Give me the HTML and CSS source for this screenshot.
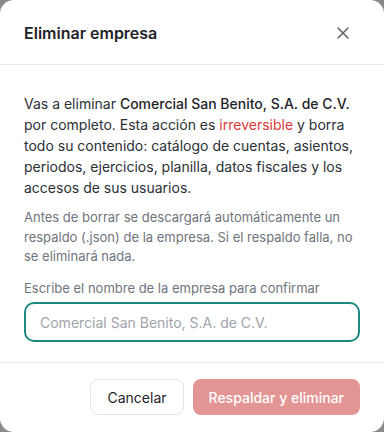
FILE: index.html
```html
<!DOCTYPE html>
<html lang="es">
<head>
  <meta charset="UTF-8">
  <meta name="viewport" content="width=device-width, initial-scale=1.0">
  <title>Eliminar empresa</title>
  <link rel="stylesheet" href="styles.css">
</head>
<body>
  <div class="modal">
    <div class="modal-header">
      <h2 class="modal-title">Eliminar empresa</h2>
      <button class="close" aria-label="Cerrar">
        <svg width="14" height="14" viewBox="0 0 14 14" fill="none" stroke="currentColor" stroke-width="1.5" stroke-linecap="round">
          <path d="M2 2L12 12M12 2L2 12"/>
        </svg>
      </button>
    </div>

    <div class="modal-body">
      <p class="lead">
        Vas a eliminar <strong>Comercial San Benito, S.A. de C.V.</strong> por completo.
        Esta acción es <span class="danger">irreversible</span> y borra todo su contenido:
        catálogo de cuentas, asientos, periodos, ejercicios, planilla, datos fiscales y los
        accesos de sus usuarios.
      </p>
      <p class="note">
        Antes de borrar se descargará automáticamente un respaldo (.json) de la empresa.
        Si el respaldo falla, no se eliminará nada.
      </p>
      <label class="field-label" for="confirm">Escribe el nombre de la empresa para confirmar</label>
      <input id="confirm" class="field" type="text" placeholder="Comercial San Benito, S.A. de C.V.">
    </div>

    <div class="modal-footer">
      <button class="btn btn-secondary">Cancelar</button>
      <button class="btn btn-danger" disabled>Respaldar y eliminar</button>
    </div>
  </div>
</body>
</html>
```

FILE: styles.css
```css
* {
  box-sizing: border-box;
}

body {
  margin: 0;
  height: 100vh;
  background: #8a8a8a;
  font-family: Inter, "Noto Sans", sans-serif;
  color: #2b2f36;
}

.modal {
  height: 432px;
  background: #ffffff;
  border-radius: 14px;
  display: flex;
  flex-direction: column;
  overflow: hidden;
}

.modal-header {
  display: flex;
  align-items: center;
  justify-content: space-between;
  height: 65px;
  padding: 2px 24px 0;
  border-bottom: 1px solid #e8e8ea;
}

.modal-title {
  margin: 0;
  font-size: 16px;
  font-weight: 600;
  color: #1f2329;
}

.close {
  display: flex;
  padding: 4px;
  margin-right: 6px;
  border: none;
  background: none;
  color: #5f6368;
  cursor: pointer;
}

.modal-body {
  flex: 1;
  padding: 28px 24px 0;
  display: flex;
  flex-direction: column;
}

.lead {
  margin: 0 0 10px;
  font-size: 14px;
  line-height: 21px;
  color: #2b2f36;
}

.lead strong {
  font-weight: 500;
  color: #1f2329;
}

.danger {
  color: #dc3a3a;
}

.note {
  margin: 0 0 12px;
  font-size: 13px;
  line-height: 19.5px;
  color: #6f747c;
}

.field-label {
  font-size: 13px;
  line-height: 19.5px;
  color: #6f747c;
  margin-bottom: 4px;
}

.field {
  height: 40px;
  width: 100%;
  padding: 0 14px;
  border: 2px solid #1d8a80;
  border-radius: 10px;
  font-family: inherit;
  font-size: 14px;
  color: #2b2f36;
  outline: none;
}

.field::placeholder {
  color: #a0a4aa;
}

.modal-footer {
  display: flex;
  justify-content: flex-end;
  gap: 9px;
  height: 70px;
  padding: 16px 24px 0;
  border-top: 1px solid #e8e8ea;
}

.btn {
  height: 36px;
  padding: 0 16px;
  border-radius: 8px;
  font-family: inherit;
  font-size: 14px;
  cursor: pointer;
}

.btn-secondary {
  background: #ffffff;
  border: 1px solid #e3e4e7;
  color: #1f2329;
}

.btn-danger {
  background: #e39593;
  border: none;
  color: #ffffff;
  font-weight: 500;
  cursor: not-allowed;
}
```
